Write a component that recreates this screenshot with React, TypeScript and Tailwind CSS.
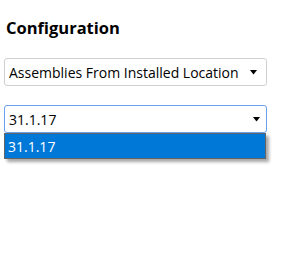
export default function App() {
  return (
    <div className="h-[253px] w-[296px] bg-white font-['Open_Sans',sans-serif] text-black">
      <div className="px-1 pt-4">
        <h2 className="pl-[2px] text-[16.5px] font-bold leading-[24px]">Configuration</h2>

        <div className="mt-[18px] flex h-[28px] w-[263px] items-center justify-between rounded-[3px] border border-[#d0d0d0] pl-1 pr-[9px] text-[14px]">
          <span>Assemblies From Installed Location</span>
          <svg width="7" height="5" viewBox="0 0 7 5">
            <path d="M0 0h7L3.5 4.5z" fill="#000" />
          </svg>
        </div>

        <div className="relative mt-[19px] w-[263px]">
          <div className="flex h-[28px] items-center justify-between rounded-[3px] border border-[#6aa0f0] pl-1 pr-[6px] text-[14px]">
            <span>31.1.17</span>
            <svg width="7" height="5" viewBox="0 0 7 5">
              <path d="M0 0h7L3.5 4.5z" fill="#000" />
            </svg>
          </div>
          <div className="absolute left-0 top-[28px] w-[262px] border border-[#646464] bg-white shadow-[3px_3px_3px_rgba(0,0,0,0.35)]">
            <div className="flex h-[24px] items-center bg-[#0078d7] pl-[3px] text-[14px] text-white">31.1.17</div>
          </div>
        </div>
      </div>
    </div>
  );
}
